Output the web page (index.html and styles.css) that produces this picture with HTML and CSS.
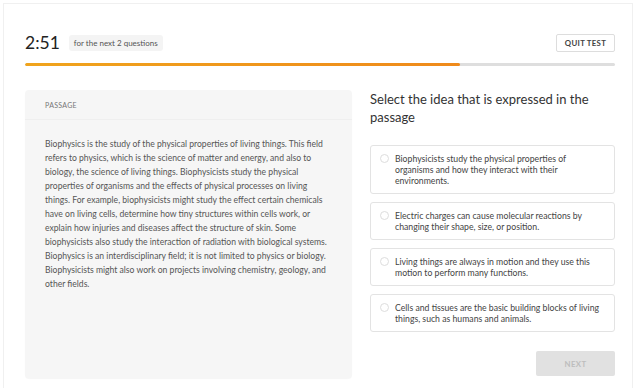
FILE: index.html
```html
<!DOCTYPE html>
<html>
<head>
<meta charset="utf-8">
<link rel="stylesheet" href="styles.css">
</head>
<body>
<div class="frame">
  <div class="topbar">
    <div class="timer-group">
      <span class="timer">2:51</span>
      <span class="pill">for the next 2 questions</span>
    </div>
    <button class="quit">QUIT TEST</button>
  </div>
  <div class="progress"><div class="progress-fill" style="width:73.7%"></div></div>
  <div class="main">
    <section class="passage">
      <div class="passage-head">PASSAGE</div>
      <div class="passage-body">Biophysics is the study of the physical properties of living things. This field refers to physics, which is the science of matter and energy, and also to biology, the science of living things. Biophysicists study the physical properties of organisms and the effects of physical processes on living things. For example, biophysicists might study the effect certain chemicals have on living cells, determine how tiny structures within cells work, or explain how injuries and diseases affect the structure of skin. Some biophysicists also study the interaction of radiation with biological systems. Biophysics is an interdisciplinary field; it is not limited to physics or biology. Biophysicists might also work on projects involving chemistry, geology, and other fields.</div>
    </section>
    <section class="question">
      <h1 class="prompt">Select the idea that is expressed in the passage</h1>
      <div class="options">
        <label class="option"><span class="radio"></span><span class="opt-text">Biophysicists study the physical properties of organisms and how they interact with their environments.</span></label>
        <label class="option"><span class="radio"></span><span class="opt-text">Electric charges can cause molecular reactions by changing their shape, size, or position.</span></label>
        <label class="option"><span class="radio"></span><span class="opt-text">Living things are always in motion and they use this motion to perform many functions.</span></label>
        <label class="option"><span class="radio"></span><span class="opt-text">Cells and tissues are the basic building blocks of living things, such as humans and animals.</span></label>
      </div>
      <div class="actions"><button class="next">NEXT</button></div>
    </section>
  </div>
</div>
</body>
</html>
```

FILE: styles.css
```css
* { box-sizing: border-box; }
html, body { margin: 0; padding: 0; background: #fff; }
body { font-family: Lato, "Open Sans", sans-serif; color: #333; overflow: hidden; }

.frame {
  margin: 3px 7px 0 3px;
  border: 1px solid #f0f0f0;
  border-bottom: none;
  height: 400px;
  padding: 30px 17px 0 21px;
}

.topbar {
  display: flex;
  align-items: center;
  justify-content: space-between;
  height: 18px;
}
.timer-group { display: flex; align-items: center; gap: 9px; }
.timer { font-size: 17.5px; line-height: 18px; color: #222; font-weight: 400; }
.pill {
  background: #f4f4f4;
  border-radius: 3px;
  font-size: 8px;
  color: #555;
  padding: 4px 5px;
  line-height: 8px;
}
.quit {
  font-family: Lato, sans-serif;
  font-size: 7.8px;
  font-weight: 700;
  letter-spacing: 0.3px;
  color: #444;
  background: #fff;
  border: 1px solid #ddd;
  border-radius: 2px;
  height: 18px;
  width: 59px;
  padding: 0;
}

.progress {
  margin-top: 11px;
  height: 3px;
  border-radius: 2px;
  background: #dedede;
  overflow: hidden;
}
.progress-fill {
  height: 100%;
  border-radius: 2px;
  background: linear-gradient(90deg, #f0a41c, #ef8a1b);
}

.main {
  margin-top: 24px;
  display: flex;
  gap: 18px;
}

.passage {
  width: 327px;
  height: 288px;
  background: #f6f6f6;
  border-radius: 4px;
  box-shadow: 0 1px 1px rgba(0,0,0,0.04);
}
.passage-head {
  height: 30px;
  padding: 0 20px;
  display: flex;
  align-items: center;
  font-size: 7px;
  letter-spacing: 0.3px;
  color: #777;
  border-bottom: 1px solid #efefef;
}
.passage-body {
  padding: 17px 20px 0 20px;
  font-size: 8.6px;
  line-height: 14px;
  color: #555;
}

.question { width: 245px; }
.prompt {
  margin: 0;
  font-weight: 400;
  font-size: 13px;
  line-height: 18px;
  color: #333;
  width: 230px;
}
.options {
  margin-top: 19px;
  display: flex;
  flex-direction: column;
  gap: 8px;
}
.option {
  display: flex;
  gap: 6px;
  border: 1px solid #e3e3e3;
  border-radius: 3px;
  padding: 7px 10px 7px 9px;
  background: #fff;
}
.radio {
  flex: none;
  width: 9px;
  height: 9px;
  border: 1px solid #ddd;
  border-radius: 50%;
  margin-top: 1px;
}
.opt-text {
  font-size: 8.7px;
  line-height: 11px;
  color: #444;
}
.actions {
  margin-top: 19px;
  display: flex;
  justify-content: flex-end;
}
.next {
  width: 79px;
  height: 25px;
  border: none;
  border-radius: 2px;
  background: #e1e1e1;
  color: #bdbdbd;
  font-family: Lato, sans-serif;
  font-size: 7.8px;
  font-weight: 700;
  letter-spacing: 0.4px;
  padding: 0;
}
```
